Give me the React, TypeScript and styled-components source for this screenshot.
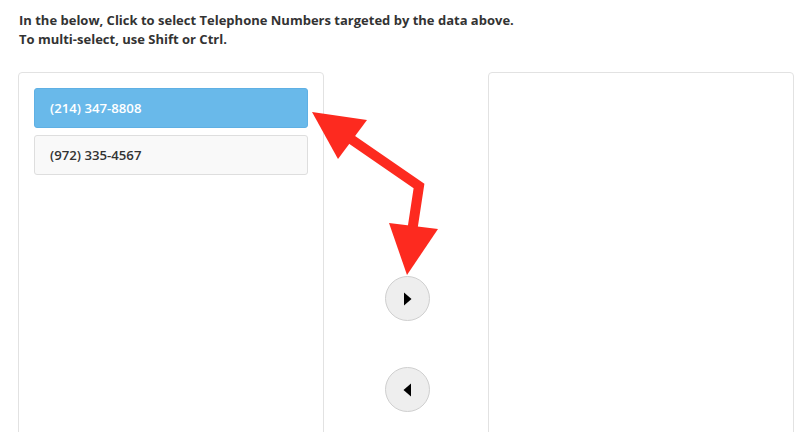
import React from "react";
import styled, { createGlobalStyle } from "styled-components";

const Global = createGlobalStyle`
  html, body { margin: 0; padding: 0; background: #fff; }
  body { font-family: "Open Sans", "Liberation Sans", sans-serif; color: #333; }
`;

const Page = styled.div`
  position: relative;
  padding: 11px 0 0 18px;
  width: 810px;
  height: 432px;
  box-sizing: border-box;
  overflow: hidden;
`;

const Instructions = styled.div`
  font-size: 13px;
  font-weight: 700;
  line-height: 19px;
  padding-left: 1px;
  color: #333;
`;

const Columns = styled.div`
  display: flex;
  margin-top: 23px;
  align-items: flex-start;
`;

const Panel = styled.div`
  flex-shrink: 0;
  width: 306px;
  height: 420px;
  box-sizing: border-box;
  border: 1px solid #e2e2e2;
  border-radius: 4px;
  padding: 15px 15px;
  display: flex;
  flex-direction: column;
  gap: 7px;
`;

const Item = styled.div<{ $selected?: boolean }>`
  height: 40px;
  box-sizing: border-box;
  border: 1px solid ${(p) => (p.$selected ? "#5fb0e4" : "#dedede")};
  background: ${(p) => (p.$selected ? "#69b9ea" : "#f9f9f9")};
  color: ${(p) => (p.$selected ? "#fff" : "#333")};
  border-radius: 3px;
  padding: 0 15px;
  display: flex;
  align-items: center;
  font-size: 13.2px;
  font-weight: 600;
`;

const Middle = styled.div`
  flex-shrink: 0;
  width: 164px;
  display: flex;
  flex-direction: column;
  align-items: center;
  padding-top: 204px;
  padding-left: 2px;
  box-sizing: border-box;
  gap: 46px;
`;

const RoundButton = styled.button`
  width: 45px;
  height: 45px;
  border-radius: 50%;
  border: 1px solid #cfcfcf;
  background: #eeeeee;
  display: flex;
  align-items: center;
  justify-content: center;
  padding: 0;
  cursor: pointer;
`;

const Arrow = styled.svg`
  position: absolute;
  left: 0;
  top: 0;
  pointer-events: none;
`;

export default function App() {
  return (
    <Page>
      <Global />
      <Instructions>
        In the below, Click to select Telephone Numbers targeted by the data above.
        <br />
        To multi-select, use Shift or Ctrl.
      </Instructions>
      <Columns>
        <Panel>
          <Item $selected>(214) 347-8808</Item>
          <Item>(972) 335-4567</Item>
        </Panel>
        <Middle>
          <RoundButton aria-label="move right">
            <svg width="9" height="14" viewBox="0 0 9 14">
              <path d="M1 0.5 L8.5 7 L1 13.5 Z" fill="#000" />
            </svg>
          </RoundButton>
          <RoundButton aria-label="move left">
            <svg width="9" height="14" viewBox="0 0 9 14">
              <path d="M8 0.5 L0.5 7 L8 13.5 Z" fill="#000" />
            </svg>
          </RoundButton>
        </Middle>
        <Panel />
      </Columns>
      <Arrow width="810" height="432" viewBox="0 0 810 432">
        <polyline
          points="345,135 419,186 412,232"
          fill="none"
          stroke="#fd2a1f"
          strokeWidth="10"
          strokeLinejoin="miter"
        />
        <polygon points="312,112 367,120 338,159" fill="#fd2a1f" />
        <polygon points="389,223 438,229 407,275" fill="#fd2a1f" />
      </Arrow>
    </Page>
  );
}
